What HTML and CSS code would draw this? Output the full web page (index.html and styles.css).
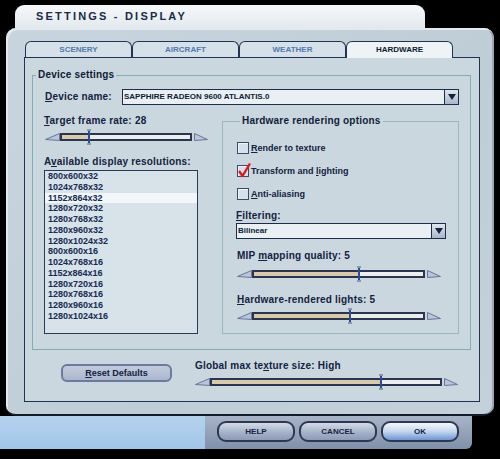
FILE: index.html
```html
<!DOCTYPE html>
<html lang="en">
<head>
    <meta charset="UTF-8">
    <title>Settings - Display</title>
    <link rel="stylesheet" href="styles.css">
</head>
<body>
    <div class="screen">
        <div class="titlebar">SETTINGS - DISPLAY</div>

        <div class="panel">
            <div class="tabs">
                <div class="tab">SCENERY</div>
                <div class="tab">AIRCRAFT</div>
                <div class="tab">WEATHER</div>
                <div class="tab active">HARDWARE</div>
            </div>

            <div class="page">
                <fieldset class="group device-group">
                    <legend>Device settings</legend>

                    <div class="device-row">
                        <div class="label device-label"><u>D</u>evice name:</div>
                        <div class="select device-select">
                            <span class="select-text">SAPPHIRE RADEON 9600 ATLANTIS.0</span>
                            <span class="drop"><svg width="8" height="6" viewBox="0 0 8 6"><polygon points="0,0 8,0 4,6" fill="#14223e"/></svg></span>
                        </div>
                    </div>

                    <div class="columns">
                        <div class="left-col">
                            <div class="label"><u>T</u>arget frame rate: 28</div>
                            <div class="slider slider-frame">
                                <svg class="wedge" width="15" height="8" viewBox="0 0 15 8"><polygon points="14.5,0.5 14.5,7.5 0.5,6.5"/></svg>
                                <div class="track"><div class="fill" style="width:21%"></div><div class="thumb" style="left:21%"></div></div>
                                <svg class="wedge wedge-right" width="14" height="8" viewBox="0 0 14 8"><polygon points="0.5,0.5 0.5,7.5 13.5,6.5"/></svg>
                            </div>
                            <div class="label list-label">A<u>v</u>ailable display resolutions:</div>
                            <ul class="listbox">
                                <li>800x600x32</li>
                                <li>1024x768x32</li>
                                <li class="selected">1152x864x32</li>
                                <li>1280x720x32</li>
                                <li>1280x768x32</li>
                                <li>1280x960x32</li>
                                <li>1280x1024x32</li>
                                <li>800x600x16</li>
                                <li>1024x768x16</li>
                                <li>1152x864x16</li>
                                <li>1280x720x16</li>
                                <li>1280x768x16</li>
                                <li>1280x960x16</li>
                                <li>1280x1024x16</li>
                            </ul>
                        </div>

                        <fieldset class="group hw-group">
                            <legend>Hardware rendering options</legend>

                            <div class="check-row">
                                <span class="box"></span>
                                <span class="check-label"><u>R</u>ender to texture</span>
                            </div>
                            <div class="check-row">
                                <span class="box">
                                    <svg class="tick" width="15" height="16" viewBox="0 0 15 16"><path d="M2 9 L5.5 14 L13 1.5" fill="none" stroke="#e01818" stroke-width="2.4" stroke-linejoin="round"/></svg>
                                </span>
                                <span class="check-label">Transform and <u>l</u>ighting</span>
                            </div>
                            <div class="check-row">
                                <span class="box"></span>
                                <span class="check-label"><u>A</u>nti-aliasing</span>
                            </div>

                            <div class="label filter-label"><u>F</u>iltering:</div>
                            <div class="select filter-select">
                                <span class="select-text">Bilinear</span>
                                <span class="drop"><svg width="8" height="6" viewBox="0 0 8 6"><polygon points="0,0 8,0 4,6" fill="#14223e"/></svg></span>
                            </div>

                            <div class="label mip-label">MIP <u>m</u>apping quality: 5</div>
                            <div class="slider slider-hw">
                                <svg class="wedge" width="15" height="8" viewBox="0 0 15 8"><polygon points="14.5,0.5 14.5,7.5 0.5,6.5"/></svg>
                                <div class="track"><div class="fill" style="width:62%"></div><div class="thumb" style="left:62%"></div></div>
                                <svg class="wedge wedge-right" width="14" height="8" viewBox="0 0 14 8"><polygon points="0.5,0.5 0.5,7.5 13.5,6.5"/></svg>
                            </div>

                            <div class="label lights-label"><u>H</u>ardware-rendered lights: 5</div>
                            <div class="slider slider-hw">
                                <svg class="wedge" width="15" height="8" viewBox="0 0 15 8"><polygon points="14.5,0.5 14.5,7.5 0.5,6.5"/></svg>
                                <div class="track"><div class="fill" style="width:57%"></div><div class="thumb" style="left:57%"></div></div>
                                <svg class="wedge wedge-right" width="14" height="8" viewBox="0 0 14 8"><polygon points="0.5,0.5 0.5,7.5 13.5,6.5"/></svg>
                            </div>
                        </fieldset>
                    </div>
                </fieldset>

                <div class="bottom-row">
                    <button class="reset-button"><u>R</u>eset Defaults</button>
                    <div class="global">
                        <div class="label">Global max te<u>x</u>ture size: High</div>
                        <div class="slider slider-global">
                            <svg class="wedge" width="15" height="8" viewBox="0 0 15 8"><polygon points="14.5,0.5 14.5,7.5 0.5,6.5"/></svg>
                            <div class="track"><div class="fill" style="width:74%"></div><div class="thumb" style="left:74%"></div></div>
                            <svg class="wedge wedge-right" width="14" height="8" viewBox="0 0 14 8"><polygon points="0.5,0.5 0.5,7.5 13.5,6.5"/></svg>
                        </div>
                    </div>
                </div>
            </div>
        </div>

        <div class="footer">
            <div class="footer-left"></div>
            <div class="footer-bar">
                <button class="btn">HELP</button>
                <button class="btn">CANCEL</button>
                <button class="btn btn-ok">OK</button>
            </div>
        </div>
    </div>
</body>
</html>
```

FILE: styles.css
```css
body {
    margin: 0;
    background: #000;
    font-family: "Liberation Sans", Arial, sans-serif;
    color: #12223f;
}
.screen {
    width: 500px;
    height: 459px;
    overflow: hidden;
    background: #000;
}
.titlebar {
    margin: 5px 0 0 15px;
    width: 410px;
    height: 23px;
    box-sizing: border-box;
    padding-left: 21px;
    line-height: 23px;
    background: linear-gradient(#f6f8fa, #e2e9ee);
    border-radius: 9px 9px 0 0;
    font-size: 11px;
    font-weight: bold;
    letter-spacing: 2.2px;
    color: #1c2a46;
}
.panel {
    margin: 0 6px;
    height: 388px;
    box-sizing: border-box;
    padding: 13px 0 0 18px;
    background: linear-gradient(135deg, #c8d5de, #bfcdd7 60%, #c4d1da);
    border-radius: 10px;
    border-bottom: 2px solid #141c28;
    box-shadow: inset 2px 2px 0 #e3eaef, inset -2px 0 0 #9aa8b6;
}
.tabs {
    display: flex;
    height: 16px;
    margin-left: 1px;
}
.tab {
    width: 107px;
    height: 16px;
    box-sizing: border-box;
    border: 1px solid #233352;
    border-bottom: none;
    border-radius: 6px 6px 0 0;
    background: #d6e0e8;
    text-align: center;
    line-height: 16px;
    font-size: 8px;
    font-weight: bold;
    color: #4d7bb0;
}
.tab.active {
    height: 17px;
    margin-bottom: -1px;
    background: #eef3f6;
    color: #0f1a30;
    position: relative;
}
.page {
    width: 456px;
    height: 345px;
    box-sizing: border-box;
    border: 1px solid #223252;
    background: #cbd7df;
}

.group {
    margin: 0;
    padding: 0;
    min-width: 0;
    box-sizing: border-box;
    border: 1px solid #84adb3;
}
.group legend {
    margin-left: 3px;
    padding: 0 2px;
    font-size: 10px;
    font-weight: bold;
    letter-spacing: 0.2px;
    color: #0e1c38;
}
.device-group {
    margin: 11px 0 0 7px;
    width: 439px;
    height: 281px;
}
.device-group > legend {
    line-height: 12px;
}
.label {
    font-size: 10px;
    font-weight: bold;
    letter-spacing: 0.2px;
    line-height: 14px;
    color: #12223f;
}
.device-row {
    display: flex;
    align-items: center;
    margin-top: 8px;
    padding-left: 12px;
    height: 16px;
}
.device-label {
    width: 77px;
}
.select {
    display: flex;
    height: 16px;
    box-sizing: border-box;
    border: 1px solid #1c2c4c;
    background: #e9eff3;
}
.select-text {
    flex: 1;
    padding-left: 1px;
    font-size: 8px;
    font-weight: bold;
    line-height: 14px;
    color: #0f1c36;
}
.drop {
    width: 13px;
    display: flex;
    align-items: center;
    justify-content: center;
    border-left: 1px solid #1c2c4c;
    background: linear-gradient(#dfe6ee, #a9b6c9);
}
.device-select {
    width: 337px;
}
.columns {
    display: flex;
    margin-top: 9px;
    padding-left: 11px;
}
.left-col {
    width: 165px;
}
.list-label {
    margin-top: 13px;
}
.listbox {
    list-style: none;
    margin: 1px 0 0;
    padding: 0;
    width: 154px;
    height: 164px;
    box-sizing: border-box;
    border: 1px solid #2a3a5a;
    background: #d8e2e9;
}
.listbox li {
    padding-left: 3px;
    font-size: 9px;
    font-weight: bold;
    line-height: 10.75px;
    color: #142a52;
}
.listbox li.selected {
    background: #f3f6f8;
}

.slider {
    display: flex;
    align-items: center;
    height: 10px;
    margin-top: 4px;
}
.wedge {
    flex: none;
}
.wedge polygon {
    fill: #bcc3da;
    stroke: #66769c;
    stroke-width: 1;
}
.wedge-right {
    margin-left: 2px;
}
.track {
    flex: 1;
    position: relative;
    height: 8px;
    box-sizing: border-box;
    border: 2px solid #2c3550;
    background: #eceeee;
}
.fill {
    height: 100%;
    background: #dac9a8;
}
.thumb {
    position: absolute;
    top: -6px;
    width: 2px;
    height: 16px;
    margin-left: -1px;
    background: #2a4a9c;
}
.thumb::before,
.thumb::after {
    content: "";
    position: absolute;
    left: -1px;
    width: 4px;
    height: 2px;
    background: #8a98a8;
}
.thumb::before {
    top: 0;
}
.thumb::after {
    bottom: 0;
}
.slider-frame {
    width: 163px;
    margin-left: 1px;
}

.hw-group {
    margin-left: 13px;
    width: 237px;
    height: 220px;
    padding-left: 14px;
    padding-top: 8px;
    border-color: #9ab7bb;
}
.hw-group > legend {
    line-height: 14px;
}
.check-row {
    display: flex;
    align-items: center;
    height: 23px;
}
.box {
    position: relative;
    width: 12px;
    height: 12px;
    box-sizing: border-box;
    margin-right: 2px;
    border: 1px solid #3a4a6c;
    background: #d5e1ea;
    box-shadow: inset 1px 1px 0 #f2f6f8;
}
.tick {
    position: absolute;
    left: -1px;
    top: -4px;
}
.check-label {
    font-size: 9px;
    font-weight: bold;
    color: #12223f;
}
.filter-label {
    margin-top: 4px;
    margin-left: -1px;
}
.filter-select {
    margin-left: -1px;
    width: 210px;
}
.mip-label {
    margin-top: 10px;
}
.lights-label {
    margin-top: 14px;
}
.slider-hw {
    width: 204px;
}
.mip-label + .slider-hw {
    margin-top: 6px;
}

.bottom-row {
    display: flex;
    margin-top: 9px;
}
.reset-button {
    margin: 5px 0 0 36px;
    width: 111px;
    height: 18px;
    padding: 0;
    border: 2px solid #6c7aa2;
    border-radius: 6px;
    background: linear-gradient(#c2cbdc, #aab6cc);
    font-family: inherit;
    font-size: 9px;
    font-weight: bold;
    color: #12223f;
}
.global {
    margin-left: 23px;
}
.slider-global {
    width: 263px;
}

.footer {
    display: flex;
    height: 33px;
}
.footer-left {
    width: 205px;
    background: linear-gradient(#b4d2ee, #a2c6e8);
}
.footer-bar {
    width: 267px;
    display: flex;
    gap: 4px;
    box-sizing: border-box;
    padding: 5px 0 0 12px;
    background: linear-gradient(#a8b4c8, #8090aa);
    border-radius: 0 0 6px 0;
}
.btn {
    width: 78px;
    height: 21px;
    padding: 0;
    border: 2px solid #2e3852;
    border-radius: 9px;
    background: linear-gradient(#d4dbe8, #a6b2c8 55%, #8c9ab8);
    font-family: inherit;
    font-size: 8px;
    font-weight: bold;
    color: #18223c;
}
.btn-ok {
    background: linear-gradient(#f4f7fb, #c4d6ee 50%, #6a96d4);
}
```
